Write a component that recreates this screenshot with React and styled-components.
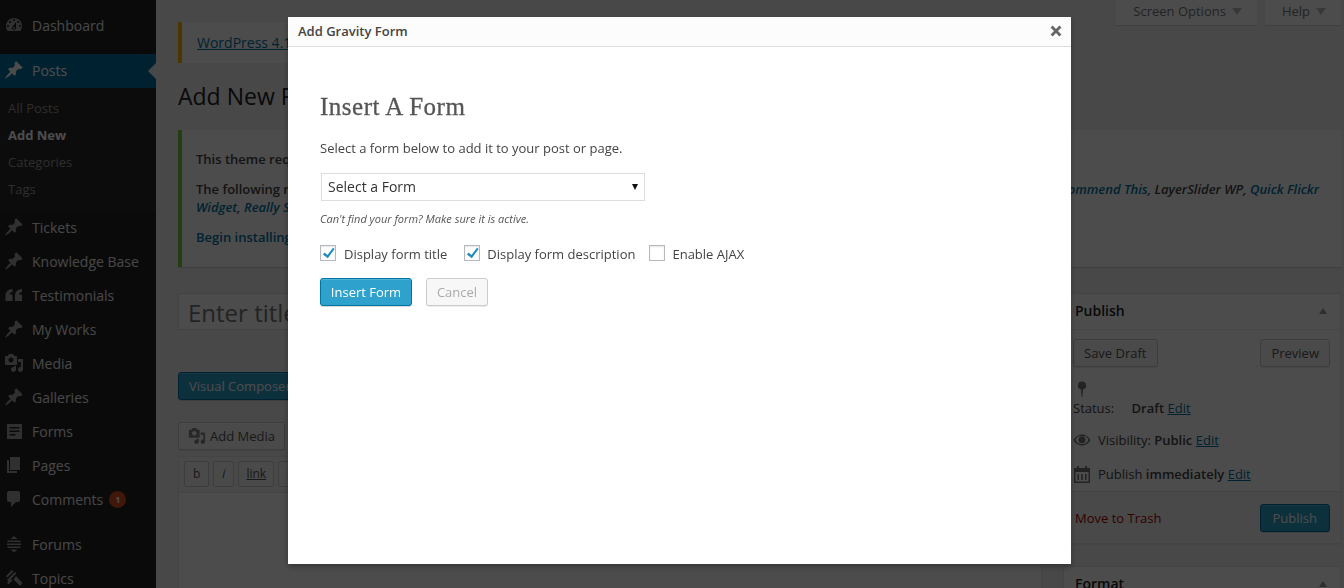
import React from 'react'
import styled, { createGlobalStyle } from 'styled-components'

const Global = createGlobalStyle`
  html, body {
    margin: 0;
    height: 588px;
    overflow: hidden;
    background: #f1f1f1;
    font-family: "Open Sans", sans-serif;
    font-size: 13px;
    color: #444;
  }
  * { box-sizing: border-box; }
  a { color: #0074a2; }
`

const Shell = styled.div`
  display: flex;
  width: 1344px;
  height: 588px;
  overflow: hidden;
`
const Sidebar = styled.nav`
  flex: 0 0 156px;
  background: #222;
  color: #eee;
  padding-top: 9px;
`
const MenuItem = styled.div`
  position: relative;
  display: flex;
  align-items: center;
  height: ${p => p.$h || 34}px;
  margin-top: ${p => p.$gap || 0}px;
  padding: 0 0 2px 4px;
  font-size: 14px;
  background: ${p => (p.$active ? '#0074a2' : 'transparent')};
  svg { flex: 0 0 20px; width: 20px; height: 20px; margin-right: 8px; fill: #a0a0a0; }
  ${p => p.$active && `
    svg { fill: #fff; }
    color: #fff;
    &:after {
      content: '';
      position: absolute;
      right: 0;
      top: 50%;
      margin-top: -8px;
      border: 8px solid transparent;
      border-left-width: 0;
      border-right-color: #f1f1f1;
    }
  `}
`
const SubMenu = styled.div`
  background: #2a2a2a;
  padding: 7px 0 8px;
`
const SubItem = styled.div`
  height: 27px;
  line-height: 27px;
  padding-left: 8px;
  font-size: 13px;
  color: ${p => (p.$current ? '#fff' : '#999')};
  font-weight: ${p => (p.$current ? 700 : 400)};
`
const Badge = styled.span`
  display: inline-block;
  width: 17px;
  height: 17px;
  margin-left: 6px;
  border-radius: 50%;
  background: #d54e21;
  color: #fff;
  font-size: 9px;
  font-weight: 700;
  line-height: 17px;
  text-align: center;
`

const Main = styled.main`
  flex: 1;
  min-width: 0;
  padding-left: 22px;
  position: relative;
`
const TopTabs = styled.div`
  display: flex;
  justify-content: flex-end;
  gap: 8px;
  height: 25px;
  padding-right: 3px;
  margin-bottom: -3px;
`
const Tab = styled.div`
  display: flex;
  align-items: center;
  gap: 6px;
  padding: 0 15px 3px 17px;
  height: 25px;
  background: #fff;
  box-shadow: 0 1px 1px rgba(0,0,0,.1);
  font-size: 13px;
  color: #777;
  &:after {
    content: '';
    border: 5px solid transparent;
    border-bottom-width: 0;
    border-top: 7px solid #bbb;
  }
`
const UpdateNag = styled.div`
  width: 300px;
  height: 41px;
  border-left: 4px solid #ffba00;
  background: #fff;
  padding: 11px 15px;
  font-size: 14px;
  line-height: 20px;
`
const PageTitle = styled.h1`
  margin: 17px 0 18px;
  height: 32px;
  font-size: 23px;
  font-weight: 400;
  line-height: 32px;
  color: #222;
`
const Notice = styled.div`
  width: 1164px;
  height: 137px;
  border-left: 4px solid #7ad03a;
  background: #fff;
  box-shadow: 0 1px 1px rgba(0,0,0,.1);
  padding: 20px 23px 0 14px;
  font-size: 13px;
  line-height: 18px;
  font-weight: 600;
  a { text-decoration: none; }
  em { font-weight: 600; }
`
const NoticeLine = styled.p`
  margin: 0 0 12px;
`
const NoticeWrapRow = styled.div`
  display: flex;
  justify-content: space-between;
`
const Columns = styled.div`
  display: flex;
  gap: 21px;
  margin-top: 26px;
`
const EditorColumn = styled.div`
  flex: 0 0 864px;
`
const TitleField = styled.div`
  height: 37px;
  padding: 1px 9px 0;
  border: 1px solid #ddd;
  background: #fff;
  font-size: 24px;
  line-height: 35px;
  color: #777;
`
const PrimaryButton = styled.div`
  display: inline-flex;
  align-items: center;
  justify-content: center;
  height: 28px;
  padding: 0 ${p => p.$pad || 0}px;
  border: 1px solid #0074a2;
  border-radius: 3px;
  background: #2ea2cc;
  color: #fff;
  font-size: 13px;
  white-space: nowrap;
  box-shadow: inset 0 1px 0 rgba(120,200,230,.5), 0 1px 0 rgba(0,0,0,.15);
`
const VisualButton = styled(PrimaryButton)`
  margin-top: 42px;
  width: 200px;
  padding-left: 10px;
  justify-content: flex-start;
`
const MediaRow = styled.div`
  display: flex;
  gap: 6px;
  margin-top: 22px;
`
const GreyButton = styled.div`
  display: inline-flex;
  align-items: center;
  height: 28px;
  padding: 0 ${p => p.$pad || 10}px;
  border: 1px solid #ccc;
  border-radius: 3px;
  background: #f7f7f7;
  color: #555;
  font-size: 13px;
  box-shadow: inset 0 1px 0 #fff, 0 1px 0 rgba(0,0,0,.08);
  svg { width: 18px; height: 18px; margin-right: 4px; fill: #888; }
`
const EditorBox = styled.div`
  margin-top: 6px;
  height: 200px;
  border: 1px solid #e5e5e5;
  background: #fff;
`
const QuickTags = styled.div`
  display: flex;
  gap: 4px;
  height: 36px;
  padding: 4px 5px;
  background: #f5f5f5;
  border-bottom: 1px solid #e5e5e5;
`
const QuickTag = styled.div`
  height: 26px;
  padding: 0 ${p => p.$pad || 8}px;
  border: 1px solid #ccc;
  border-radius: 2px;
  background: #f7f7f7;
  color: #555;
  font-size: 12px;
  line-height: 24px;
  font-style: ${p => (p.$italic ? 'italic' : 'normal')};
  text-decoration: ${p => (p.$underline ? 'underline' : 'none')};
`
const SideColumn = styled.aside`
  flex: 0 0 278px;
`
const Box = styled.section`
  background: #fff;
  border: 1px solid #e5e5e5;
  box-shadow: 0 1px 1px rgba(0,0,0,.04);
  margin-bottom: 22px;
`
const BoxHead = styled.div`
  display: flex;
  align-items: center;
  justify-content: space-between;
  height: 36px;
  padding: 0 13px 2px 11px;
  font-size: 14px;
  font-weight: 600;
  color: #222;
  border-bottom: 1px solid #eee;
  &:after {
    content: '';
    border: 4px solid transparent;
    border-top-width: 0;
    border-bottom: 6px solid #999;
  }
`
const ActionRow = styled.div`
  display: flex;
  justify-content: space-between;
  padding: 9px 10px 0 9px;
`
const StatusBlock = styled.div`
  padding: 14px 9px 5px;
  font-size: 13px;
  line-height: 20px;
  svg { display: block; margin: 0 0 1px 4px; fill: #777; }
  b { font-weight: 600; margin-left: 14px; }
`
const StatusRow = styled.div`
  display: flex;
  align-items: center;
  gap: 7px;
  height: 34px;
  padding: 0 9px;
  font-size: 13px;
  svg { width: 18px; height: 18px; fill: #777; }
  strong { font-weight: 600; }
`
const MajorActions = styled.div`
  display: flex;
  align-items: center;
  justify-content: space-between;
  height: 52px;
  padding: 0 10px 0 11px;
  background: #f5f5f5;
  border-top: 1px solid #ddd;
  color: #a00;
`

const Backdrop = styled.div`
  position: fixed;
  inset: 0;
  background: rgba(0,0,0,.7);
`
const Modal = styled.div`
  position: fixed;
  left: 288px;
  top: 17px;
  width: 783px;
  height: 547px;
  background: #fff;
  box-shadow: 0 3px 6px rgba(0,0,0,.3);
`
const ModalHead = styled.div`
  display: flex;
  align-items: center;
  justify-content: space-between;
  height: 30px;
  padding: 0 9px 2px 10px;
  background: #fcfcfc;
  border-bottom: 1px solid #ddd;
  font-size: 13px;
  font-weight: 600;
  color: #444;
  svg { width: 12px; height: 12px; fill: #666; }
`
const ModalBody = styled.div`
  padding: 44px 32px 0;
`
const ModalTitle = styled.h2`
  margin: 0;
  height: 32px;
  font-family: "Liberation Serif", serif;
  font-size: 25px;
  font-weight: 400;
  line-height: 32px;
  letter-spacing: .5px;
  -webkit-text-stroke: .3px #555;
  color: #555;
`
const Lead = styled.p`
  margin: 16px 0 16px;
  font-size: 13px;
  line-height: 18px;
  color: #444;
`
const FormSelect = styled.div`
  position: relative;
  width: 324px;
  height: 28px;
  margin-left: 1px;
  padding-left: 6px;
  border: 1px solid #ddd;
  font-size: 14px;
  line-height: 26px;
  color: #333;
  &:after {
    content: '';
    position: absolute;
    right: 6px;
    top: 10px;
    border: 3px solid transparent;
    border-bottom-width: 0;
    border-top: 6px solid #111;
  }
`
const Hint = styled.p`
  margin: 11px 0 18px;
  font-size: 11px;
  line-height: 14px;
  font-style: italic;
  color: #555;
`
const Options = styled.div`
  display: flex;
  align-items: center;
  height: 20px;
`
const Option = styled.div`
  display: flex;
  align-items: center;
  margin-right: ${p => p.$gap}px;
  font-size: 13px;
  color: #444;
`
const CheckBox = styled.span`
  display: flex;
  align-items: center;
  justify-content: center;
  width: 16px;
  height: 16px;
  margin: -2px ${p => p.$space || 7}px 0 0;
  border: 1px solid #b4b9be;
  background: #fff;
  box-shadow: inset 0 1px 2px rgba(0,0,0,.1);
  svg { width: 14px; height: 14px; fill: #1e8cbe; }
`
const ButtonRow = styled.div`
  display: flex;
  gap: 14px;
  margin-top: 14px;
`
const InsertButton = styled(PrimaryButton)`
  width: 92px;
`
const CancelButton = styled.div`
  display: flex;
  align-items: center;
  justify-content: center;
  width: 62px;
  height: 28px;
  border: 1px solid #ccc;
  border-radius: 3px;
  background: #f7f7f7;
  color: #aaa;
  font-size: 13px;
  box-shadow: 0 1px 0 rgba(0,0,0,.08);
`

const Gauge = () => (
  <svg viewBox="0 0 20 20"><path d="M3.760 16h12.480c1.100-1.370 1.760-3.110 1.760-5 0-4.420-3.580-8-8-8s-8 3.580-8 8c0 1.890.66 3.630 1.760 5zM10 4c.55 0 1 .45 1 1s-.45 1-1 1-1-.45-1-1 .45-1 1-1zM6 6c.55 0 1 .45 1 1s-.45 1-1 1-1-.45-1-1 .45-1 1-1zm8 0c.55 0 1 .45 1 1s-.45 1-1 1-1-.45-1-1 .45-1 1-1zm-5.370 5.550L12 7v6c0 1.100-.9 2-2 2s-2-.9-2-2c0-.57.24-1.080.63-1.450zM4 10c.55 0 1 .45 1 1s-.45 1-1 1-1-.45-1-1 .45-1 1-1zm12 0c.55 0 1 .45 1 1s-.45 1-1 1-1-.45-1-1 .45-1 1-1zm-5 3c0-.55-.45-1-1-1s-1 .45-1 1 .45 1 1 1 1-.45 1-1z" /></svg>
)
const Pin = () => (
  <svg viewBox="0 0 20 20"><path d="M10.440 3.020l1.820-1.820 6.360 6.350-1.830 1.820c-1.050-.68-2.480-.57-3.410.36l-.75.75c-.92.93-1.040 2.350-.35 3.410l-1.830 1.820-2.410-2.410-2.800 2.790c-.42.42-3.380 2.710-3.800 2.290s1.860-3.390 2.280-3.810l2.790-2.790L4.100 9.360l1.830-1.820c1.050.69 2.480.57 3.400-.36l.75-.75c.93-.92 1.050-2.350.36-3.410z" /></svg>
)
const Quote = () => (
  <svg viewBox="0 0 20 20"><path d="M8.500 4v3C6.700 7 5.800 8 5.700 9.500h2.800V16H1.500v-5C1.500 7 4 4 8.500 4zM18 4v3c-1.800 0-2.700 1-2.800 2.500H18V16h-7v-5c0-4 2.500-7 7-7z" /></svg>
)
const MediaIcon = () => (
  <svg viewBox="0 0 20 20"><path d="M13 11V4c0-.55-.45-1-1-1h-1.670L9 1H5L3.670 3H2c-.55 0-1 .45-1 1v7c0 .55.45 1 1 1h10c.55 0 1-.45 1-1zM7 4.500c1.380 0 2.500 1.120 2.500 2.500S8.380 9.500 7 9.500 4.500 8.380 4.500 7 5.620 4.500 7 4.500zM14 6h5v10.500c0 1.380-1.120 2.500-2.500 2.500S14 17.880 14 16.500s1.120-2.500 2.500-2.500c.17 0 .34.020.5.050V9h-3V6zm-4 8.050V13h2v3.500c0 1.380-1.120 2.500-2.500 2.500S7 17.880 7 16.500 8.120 14 9.500 14c.17 0 .34.020.5.050z" /></svg>
)
const FormIcon = () => (
  <svg viewBox="0 0 20 20"><path fillRule="evenodd" d="M3 3h15v15H3zM5.500 6v1.500h10V6zM5.500 9.500V11h10V9.500zM5.500 13v1.500h6V13z" /></svg>
)
const PagesIcon = () => (
  <svg viewBox="0 0 20 20"><path d="M6 15V2h10v13H6zm-1 1h8v2H3V5h2v11z" /></svg>
)
const CommentIcon = () => (
  <svg viewBox="0 0 20 20"><path d="M5 2h9c1.100 0 2 .9 2 2v7c0 1.100-.9 2-2 2h-2l-5 5v-5H5c-1.100 0-2-.9-2-2V4c0-1.100.9-2 2-2z" /></svg>
)
const ForumIcon = () => (
  <svg viewBox="0 0 20 20"><path d="M10 2l3.500 3h-7zM4 6.500h12L17 8H3zM3 9.500h14V11H3zM3 12.500h14L16 14H4zM6.500 15.500h7L10 18.500z" /></svg>
)
const TopicIcon = () => (
  <svg viewBox="0 0 20 20"><path d="M8 2l1.400 1.400L3.400 9.500 2 8zM11 4l1.400 1.400-8 8L3 12zM12 8l6.500 7-2.500 3-6.500-6.500zM7 11l1.400 1.400L4.500 16.300 3 15z" /></svg>
)
const Close = () => (
  <svg viewBox="0 0 12 12"><path d="M2.600.6L6 4l3.400-3.400 2 2L8 6l3.400 3.400-2 2L6 8l-3.400 3.400-2-2L4 6 .6 2.600z" /></svg>
)
const Tick = () => (
  <svg viewBox="0 0 14 14"><path d="M12 1.800l1.500 1.200-6.700 9.200L2 8.500l1.500-1.900 3 2.300z" /></svg>
)
const MapPin = () => (
  <svg width="10" height="16" viewBox="0 0 10 16"><path d="M5 .5a4 4 0 0 1 1 7.900L5.400 16h-.8L4 8.400A4 4 0 0 1 5 .5z" /></svg>
)
const Eye = () => (
  <svg viewBox="0 0 18 18"><path fillRule="evenodd" d="M9 3.500c3.800 0 7 2.500 8.500 5.500-1.500 3-4.700 5.500-8.500 5.500S2 12 .5 9C2 6 5.200 3.500 9 3.500zM9 5a6 6 0 0 0-6.500 4A6.800 6.800 0 0 0 9 13a6.800 6.800 0 0 0 6.500-4A6 6 0 0 0 9 5z" /><circle cx="9" cy="8.800" r="3.500" /></svg>
)
const Calendar = () => (
  <svg viewBox="0 0 18 18"><path fillRule="evenodd" d="M4 1h2v2h6V1h2v2h3v15H1V3h3zM2.500 7v9.500h13V7zM4.500 9H6v6H4.500zM8.200 9h1.600v6H8.200zM12 9h1.500v6H12z" /></svg>
)

const mainMenu = [
  { label: 'Tickets', icon: <Pin /> },
  { label: 'Knowledge Base', icon: <Pin /> },
  { label: 'Testimonials', icon: <Quote /> },
  { label: 'My Works', icon: <Pin /> },
  { label: 'Media', icon: <MediaIcon /> },
  { label: 'Galleries', icon: <Pin /> },
  { label: 'Forms', icon: <FormIcon /> },
  { label: 'Pages', icon: <PagesIcon /> },
]

export default function App() {
  return (
    <>
      <Global />
      <Shell>
        <Sidebar>
          <MenuItem><Gauge />Dashboard</MenuItem>
          <MenuItem $active $gap={11}><Pin />Posts</MenuItem>
          <SubMenu>
            <SubItem>All Posts</SubItem>
            <SubItem $current>Add New</SubItem>
            <SubItem>Categories</SubItem>
            <SubItem>Tags</SubItem>
          </SubMenu>
          {mainMenu.map(item => (
            <MenuItem key={item.label}>{item.icon}{item.label}</MenuItem>
          ))}
          <MenuItem><CommentIcon />Comments<Badge>1</Badge></MenuItem>
          <MenuItem $gap={11}><ForumIcon />Forums</MenuItem>
          <MenuItem><TopicIcon />Topics</MenuItem>
        </Sidebar>
        <Main>
          <TopTabs>
            <Tab>Screen Options</Tab>
            <Tab>Help</Tab>
          </TopTabs>
          <UpdateNag><a href="#">WordPress 4.1</a></UpdateNag>
          <PageTitle>Add New Post</PageTitle>
          <Notice>
            <NoticeLine>This theme requires the following plugin</NoticeLine>
            <NoticeLine as="div">
              <NoticeWrapRow>
                <span>The following recommended plugins are not installed</span>
                <em><a href="#">Recommend This</a>, LayerSlider WP, <a href="#">Quick Flickr</a></em>
              </NoticeWrapRow>
              <em><a href="#">Widget</a>, <a href="#">Really Simple</a></em>
            </NoticeLine>
            <NoticeLine><a href="#">Begin installing plugins</a></NoticeLine>
          </Notice>
          <Columns>
            <EditorColumn>
              <TitleField>Enter title here</TitleField>
              <VisualButton>Visual Composer</VisualButton>
              <MediaRow>
                <GreyButton $pad={9}><MediaIcon />Add Media</GreyButton>
                <GreyButton $pad={9}>Add Form</GreyButton>
              </MediaRow>
              <EditorBox>
                <QuickTags>
                  <QuickTag>b</QuickTag>
                  <QuickTag $italic>i</QuickTag>
                  <QuickTag $underline $pad={7}>link</QuickTag>
                  <QuickTag>b-quote</QuickTag>
                </QuickTags>
              </EditorBox>
            </EditorColumn>
            <SideColumn>
              <Box>
                <BoxHead>Publish</BoxHead>
                <ActionRow>
                  <GreyButton>Save Draft</GreyButton>
                  <GreyButton>Preview</GreyButton>
                </ActionRow>
                <StatusBlock>
                  <MapPin />
                  Status: <b>Draft</b> <a href="#">Edit</a>
                </StatusBlock>
                <StatusRow><Eye /><span>Visibility: <strong>Public</strong> <a href="#">Edit</a></span></StatusRow>
                <StatusRow><Calendar /><span>Publish <strong>immediately</strong> <a href="#">Edit</a></span></StatusRow>
                <MajorActions>
                  Move to Trash
                  <PrimaryButton $pad={12}>Publish</PrimaryButton>
                </MajorActions>
              </Box>
              <Box>
                <BoxHead>Format</BoxHead>
              </Box>
            </SideColumn>
          </Columns>
        </Main>
      </Shell>
      <Backdrop />
      <Modal>
        <ModalHead>Add Gravity Form<Close /></ModalHead>
        <ModalBody>
          <ModalTitle>Insert A Form</ModalTitle>
          <Lead>Select a form below to add it to your post or page.</Lead>
          <FormSelect>Select a Form</FormSelect>
          <Hint>Can't find your form? Make sure it is active.</Hint>
          <Options>
            <Option $gap={17}><CheckBox $space={8}><Tick /></CheckBox>Display form title</Option>
            <Option $gap={14}><CheckBox><Tick /></CheckBox>Display form description</Option>
            <Option $gap={0}><CheckBox />Enable AJAX</Option>
          </Options>
          <ButtonRow>
            <InsertButton>Insert Form</InsertButton>
            <CancelButton>Cancel</CancelButton>
          </ButtonRow>
        </ModalBody>
      </Modal>
    </>
  )
}
